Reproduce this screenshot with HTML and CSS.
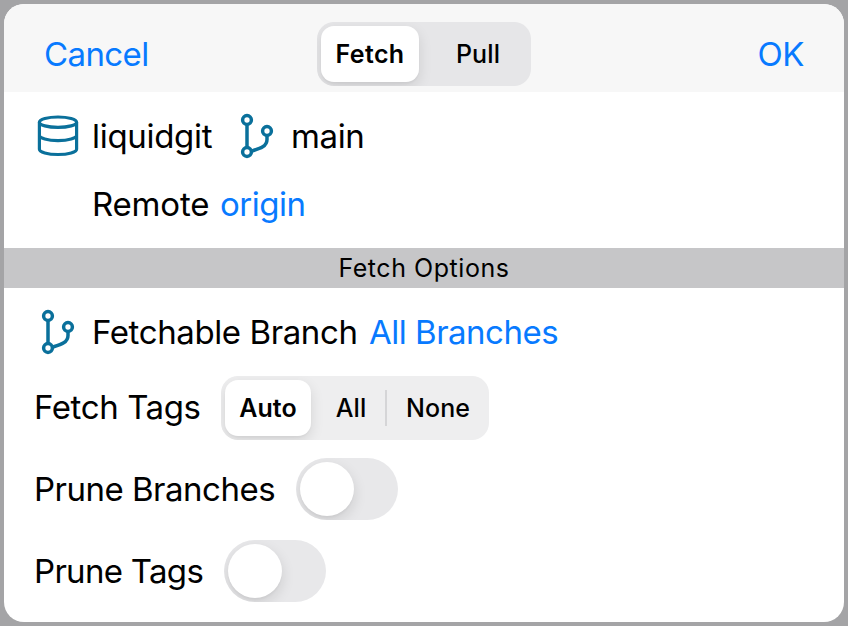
FILE: index.html
```html
<!DOCTYPE html>
<html lang="en">
<head>
  <meta charset="UTF-8" />
  <meta name="viewport" content="width=device-width, initial-scale=1.0" />
  <title>Fetch</title>
  <link rel="stylesheet" href="styles.css">
</head>
<body>
  <div class="sheet">
    <header class="topbar">
      <button class="link cancel">Cancel</button>
      <div class="segmented mode">
        <button class="segment active">Fetch</button>
        <button class="segment">Pull</button>
      </div>
      <button class="link ok">OK</button>
    </header>

    <section class="repo">
      <div class="row">
        <svg class="icon" width="42" height="44" viewBox="0 0 42 44">
          <ellipse cx="21" cy="8.2" rx="18.6" ry="5.2" />
          <path d="M2.4 8.2V35.2C2.4 38.1 10.6 40.5 21 40.5S39.6 38.1 39.6 35.2V8.2M2.4 21.3C2.4 24.2 10.6 26.6 21 26.6S39.6 24.2 39.6 21.3" />
        </svg>
        <span class="repo-name">liquidgit</span>
        <svg class="icon branch" width="34" height="46" viewBox="0 0 34 46">
          <path d="M7 11.5V34M27 22V26.5C27 33.5 20 35.5 12.2 37.9" />
          <circle cx="7" cy="7" r="4.4" />
          <circle cx="7" cy="39" r="4.4" />
          <circle cx="27" cy="18" r="4.4" />
        </svg>
        <span class="branch-name">main</span>
      </div>
      <div class="row remote">
        <span class="remote-label">Remote</span>
        <button class="link origin">origin</button>
      </div>
    </section>

    <h2 class="section-title">Fetch Options</h2>

    <section class="options">
      <div class="row fetchable">
        <svg class="icon branch" width="34" height="46" viewBox="0 0 34 46">
          <path d="M7 11.5V34M27 22V26.5C27 33.5 20 35.5 12.2 37.9" />
          <circle cx="7" cy="7" r="4.4" />
          <circle cx="7" cy="39" r="4.4" />
          <circle cx="27" cy="18" r="4.4" />
        </svg>
        <span class="fetchable-label">Fetchable Branch</span>
        <button class="link all-branches">All Branches</button>
      </div>
      <div class="row tags">
        <span class="tags-label">Fetch Tags</span>
        <div class="segmented tag-mode">
          <button class="segment active">Auto</button>
          <button class="segment">All</button>
          <span class="divider"></span>
          <button class="segment">None</button>
        </div>
      </div>
      <div class="row prune-branches">
        <span class="prune-branches-label">Prune Branches</span>
        <button class="switch" role="switch" aria-checked="false"><span class="knob"></span></button>
      </div>
      <div class="row prune-tags">
        <span class="prune-tags-label">Prune Tags</span>
        <button class="switch" role="switch" aria-checked="false"><span class="knob"></span></button>
      </div>
    </section>
  </div>
</body>
</html>
```
FILE: styles.css
```css
* {
  box-sizing: border-box;
}
body {
  margin: 0;
  padding: 4px;
  height: 626px;
  background: #a4a4a6;
  color: #000;
  font-family: Inter, "Liberation Sans", sans-serif;
  font-size: 33px;
  line-height: 40px;
  letter-spacing: -0.4px;
  white-space: nowrap;
}
button {
  padding: 0;
  border: none;
  background: none;
  font: inherit;
  letter-spacing: inherit;
  color: inherit;
  cursor: pointer;
}
.sheet {
  height: 618px;
  background: #fff;
  border-radius: 20px;
  overflow: hidden;
}
.topbar {
  display: grid;
  grid-template-columns: 1fr 214px 1fr;
  align-items: center;
  height: 88px;
  padding: 12px 40px 0;
  background: #f7f7f7;
}
.link {
  color: #087aff;
}
.cancel {
  justify-self: start;
  letter-spacing: -0.6px;
}
.ok {
  justify-self: end;
}
.segmented {
  display: flex;
  align-items: center;
  height: 64px;
  padding: 4px;
  border-radius: 17px;
  background: #eeeeef;
  font-size: 25px;
  font-weight: 500;
  letter-spacing: 0.1px;
  overflow: hidden;
}
.mode {
  background: #e6e6e8;
}
.segment {
  flex: 1;
  height: 56px;
}
.mode .segment {
  padding-left: 10px;
}
.mode .segment.active {
  padding-left: 0;
}
.segment.active {
  flex: none;
  width: 98px;
  border-radius: 13px;
  background: #fff;
  font-weight: 600;
  box-shadow: 0 5px 14px rgba(0, 0, 0, 0.11), 0 2px 2px rgba(0, 0, 0, 0.03);
}
.mode .active {
  letter-spacing: 0.4px;
}
.tag-mode .segment.active {
  width: 86px;
}
.tag-mode .segment {
  flex: none;
  width: 74px;
  padding-left: 6px;
}
.tag-mode .segment:last-child {
  width: 98px;
  padding-left: 4px;
}
.tag-mode .segment.active {
  padding-left: 0;
}
.divider {
  width: 2px;
  height: 36px;
  background: #d5d5d7;
}
.row {
  display: flex;
  align-items: center;
}
.icon {
  flex: none;
  fill: none;
  stroke: #0a709b;
  stroke-width: 3.2;
}
.branch {
  stroke-width: 3.5;
}
.repo {
  height: 156px;
  padding: 10px 33px;
}
.repo .row {
  height: 68px;
}
.repo-name {
  width: 120px;
  margin-left: 13px;
  letter-spacing: -0.3px;
}
.repo .branch {
  margin-left: 28px;
}
.branch-name {
  margin-left: 17px;
}
.remote {
  padding-left: 55px;
}
.remote-label {
  width: 128px;
  letter-spacing: -0.2px;
}
.origin {
  letter-spacing: -0.5px;
}
.section-title {
  height: 40px;
  margin: 0;
  background: #c6c6c8;
  font-size: 25px;
  font-weight: 400;
  letter-spacing: 0.55px;
  text-align: center;
}
.options {
  padding: 8px 30px;
}
.fetchable {
  height: 72px;
  padding-left: 7px;
}
.fetchable-label {
  width: 277px;
  margin-left: 17px;
}
.all-branches {
  letter-spacing: -0.5px;
}
.tags {
  margin-top: 8px;
}
.tags-label {
  width: 187px;
  padding-bottom: 2px;
}
.tag-mode {
  width: 268px;
}
.prune-branches {
  margin-top: 18px;
}
.prune-branches-label {
  width: 262px;
  letter-spacing: -0.5px;
}
.prune-tags {
  margin-top: 20px;
}
.prune-tags-label {
  width: 190px;
  letter-spacing: -0.7px;
}
.switch {
  width: 102px;
  height: 62px;
  padding: 4px;
  border-radius: 31px;
  background: #e8e8ea;
  overflow: hidden;
}
.knob {
  display: block;
  width: 54px;
  height: 54px;
  border-radius: 50%;
  background: #fff;
  box-shadow: 0 5px 14px rgba(0, 0, 0, 0.12), 0 2px 2px rgba(0, 0, 0, 0.03);
}
```
